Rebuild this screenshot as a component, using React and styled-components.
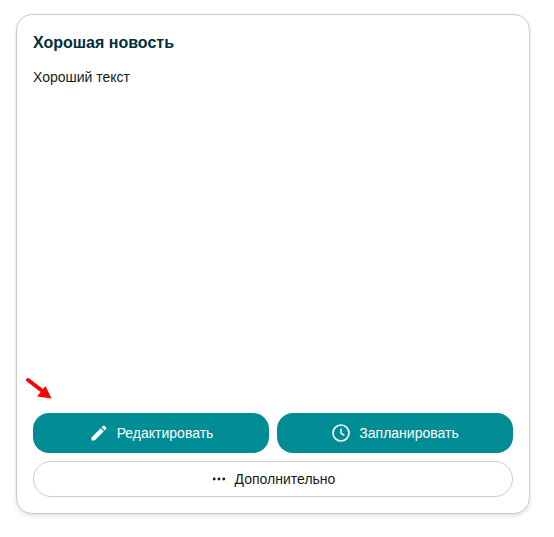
import React from "react";
import styled, { createGlobalStyle } from "styled-components";

const GlobalStyle = createGlobalStyle`
  html, body {
    margin: 0;
    padding: 0;
    background: #ffffff;
  }
  body {
    font-family: "Liberation Sans", Arial, sans-serif;
  }
`;

const Page = styled.div`
  width: 554px;
  height: 537px;
  padding: 14px 24px 0 16px;
  box-sizing: border-box;
`;

const Card = styled.section`
  position: relative;
  height: 500px;
  box-sizing: border-box;
  padding: 16px 16px 16px 16px;
  display: flex;
  flex-direction: column;
  background: #fff;
  border: 1px solid #cccccc;
  border-radius: 16px;
  box-shadow: 0 2px 4px rgba(0, 0, 0, 0.12);
`;

const Title = styled.h2`
  margin: 0;
  font-size: 16px;
  line-height: 24px;
  font-weight: 700;
  color: #002f3a;
`;

const Body = styled.p`
  margin: 10px 0 0;
  flex: 1;
  font-size: 14px;
  line-height: 24px;
  color: #1a1a1a;
`;

const Actions = styled.div`
  display: grid;
  grid-template-columns: 1fr 1fr;
  gap: 8px;
`;

const Button = styled.button`
  display: flex;
  align-items: center;
  justify-content: center;
  gap: 8px;
  height: ${(p) => (p.$outline ? "36px" : "40px")};
  padding: 0;
  grid-column: ${(p) => (p.$outline ? "1 / -1" : "auto")};
  font-family: inherit;
  font-size: 14px;
  color: ${(p) => (p.$outline ? "#1a1a1a" : "#ffffff")};
  background: ${(p) => (p.$outline ? "#ffffff" : "#008c95")};
  border: ${(p) => (p.$outline ? "1px solid #cccccc" : "none")};
  border-radius: ${(p) => (p.$outline ? "18px" : "16px")};
`;

const ArrowMark = styled.svg`
  position: absolute;
  left: 9px;
  top: 363px;
`;

function PencilIcon() {
  return (
    <svg width="20" height="20" viewBox="0 0 24 24" fill="#fff">
      <path d="M3 17.25V21h3.75L17.81 9.94l-3.75-3.75L3 17.25zM20.71 7.04a1 1 0 0 0 0-1.41l-2.34-2.34a1 1 0 0 0-1.41 0l-1.83 1.83 3.75 3.75 1.83-1.83z" />
    </svg>
  );
}

function ClockIcon() {
  return (
    <svg width="20" height="20" viewBox="0 0 24 24" fill="none" stroke="#fff" strokeWidth="2">
      <circle cx="12" cy="12" r="9.6" />
      <path d="M12 6.5V12.3L16 14.8" strokeWidth="1.7" />
    </svg>
  );
}

function DotsIcon() {
  return (
    <svg width="16" height="16" viewBox="0 0 16 16" fill="#1a1a1a">
      <circle cx="3.2" cy="8" r="1.4" />
      <circle cx="8" cy="8" r="1.4" />
      <circle cx="12.8" cy="8" r="1.4" />
    </svg>
  );
}

export default function App() {
  return (
    <Page>
      <GlobalStyle />
      <Card>
        <Title>Хорошая новость</Title>
        <Body>Хороший текст</Body>
        <ArrowMark width="26" height="22" viewBox="0 0 26 22">
          <path d="M2 2L17 13.5" stroke="#ff0000" strokeWidth="3.8" strokeLinecap="round" />
          <path d="M25.5 20.5L11 18.5L19.5 8Z" fill="#ff0000" />
        </ArrowMark>
        <Actions>
          <Button>
            <PencilIcon />
            Редактировать
          </Button>
          <Button>
            <ClockIcon />
            Запланировать
          </Button>
          <Button $outline>
            <DotsIcon />
            Дополнительно
          </Button>
        </Actions>
      </Card>
    </Page>
  );
}
